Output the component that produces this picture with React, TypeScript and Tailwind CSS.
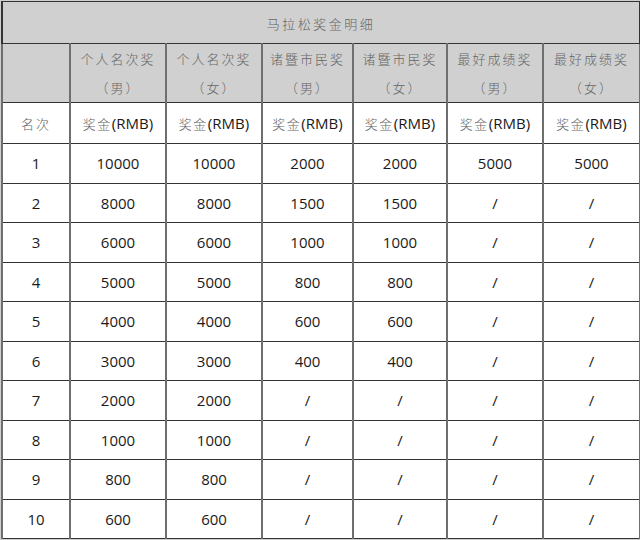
const cols = ["w-[68px]", "w-[96px]", "w-[96px]", "w-[91px]", "w-[94px]", "w-[96px]", "w-[97px]"];

const heads = [
  ["个人名次奖", "（男）"],
  ["个人名次奖", "（女）"],
  ["诸暨市民奖", "（男）"],
  ["诸暨市民奖", "（女）"],
  ["最好成绩奖", "（男）"],
  ["最好成绩奖", "（女）"],
];

const rows: string[][] = [
  ["1", "10000", "10000", "2000", "2000", "5000", "5000"],
  ["2", "8000", "8000", "1500", "1500", "/", "/"],
  ["3", "6000", "6000", "1000", "1000", "/", "/"],
  ["4", "5000", "5000", "800", "800", "/", "/"],
  ["5", "4000", "4000", "600", "600", "/", "/"],
  ["6", "3000", "3000", "400", "400", "/", "/"],
  ["7", "2000", "2000", "/", "/", "/", "/"],
  ["8", "1000", "1000", "/", "/", "/", "/"],
  ["9", "800", "800", "/", "/", "/", "/"],
  ["10", "600", "600", "/", "/", "/", "/"],
];

const cell = "border-y border-y-[#333] border-x-2 border-x-[#6e6e6e] text-center align-middle p-0";
const cjk = "font-['Noto_Sans_CJK_SC',sans-serif] text-[#666] font-light";

export default function App() {
  return (
    <div className="w-[640px] h-[540px] bg-[#cfcfcf] pt-px pl-px font-['Open_Sans','Noto_Sans_CJK_SC',sans-serif]">
      <table className="w-[638px] table-fixed border-collapse border border-[#333]">
        <colgroup>
          {cols.map((c, i) => (
            <col key={i} className={c} />
          ))}
        </colgroup>
        <tbody>
          <tr className="h-[42px] bg-[#d0d0d0]">
            <td colSpan={7} className={`${cell} border-x-[#333] border-x`}>
              <span className={`${cjk} text-[13px] tracking-[2.5px] text-[#555]`}>马拉松奖金明细</span>
            </td>
          </tr>
          <tr className="h-[59px] bg-[#d0d0d0]">
            <td className={cell}></td>
            {heads.map((h, i) => (
              <td key={i} className={cell}>
                <div className={`${cjk} text-[13px] tracking-[2px] leading-[29px]`}>
                  <div>{h[0]}</div>
                  <div>{h[1]}</div>
                </div>
              </td>
            ))}
          </tr>
          <tr className="h-[41px] bg-white">
            <td className={cell}>
              <span className={`${cjk} text-[13px] tracking-[2px]`}>名次</span>
            </td>
            {heads.map((_, i) => (
              <td key={i} className={cell}>
                <span className={`${cjk} text-[13px] tracking-[1.5px]`}>奖金</span>
                <span className="text-[15px] text-[#1a1a1a]">(RMB)</span>
              </td>
            ))}
          </tr>
          {rows.map((r, i) => (
            <tr key={i} className="h-[39.5px] bg-white">
              {r.map((v, j) => (
                <td key={j} className={`${cell} text-[15px] text-[#1a1a1a]`}>
                  {v}
                </td>
              ))}
            </tr>
          ))}
        </tbody>
      </table>
    </div>
  );
}
